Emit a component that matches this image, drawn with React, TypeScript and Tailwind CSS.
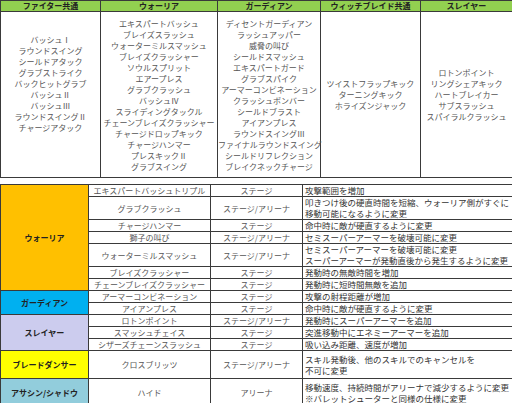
import React from "react";

const skillColumns = [
  {
    title: "ファイター共通",
    pad: true,
    skills: ["バッシュⅠ", "ラウンドスイング", "シールドアタック", "グラブストライク", "バックヒットグラブ", "バッシュⅡ", "バッシュⅢ", "ラウンドスイングⅡ", "チャージアタック"],
  },
  {
    title: "ウォーリア",
    skills: ["エキスパートバッシュ", "ブレイズスラッシュ", "ウォーターミルスマッシュ", "ブレイズクラッシャー", "ソウルスプリット", "エアープレス", "グラブクラッシュ", "バッシュⅣ", "スライディングタックル", "チェーンブレイズクラッシャー", "チャージドロップキック", "チャージハンマー", "プレスキックⅡ", "グラブスイング"],
  },
  {
    title: "ガーディアン",
    skills: ["ディセントガーディアン", "ラッシュアッパー", "威脅の叫び", "シールドスマッシュ", "エキスパートガード", "グラブスパイク", "アーマーコンビネーション", "クラッシュボンバー", "シールドブラスト", "アイアンプレス", "ラウンドスイングⅢ", "ファイナルラウンドスイング", "シールドリフレクション", "ブレイクネックチャージ"],
  },
  {
    title: "ウィッチブレイド共通",
    skills: ["ツイストフラップキック", "ターニングキック", "ホライズンジャック"],
  },
  {
    title: "スレイヤー",
    skills: ["ロトンポイント", "リングシェアキック", "ハートブレイカー", "サブスラッシュ", "スパイラルクラッシュ"],
  },
];

type Change = { skill: string; mode: string; note: string[]; h: string };
type Group = { name: string; bg: string; rows: Change[] };

const groups: Group[] = [
  {
    name: "ウォーリア",
    bg: "bg-[#ffc000]",
    rows: [
      { skill: "エキスパートバッシュトリプル", mode: "ステージ", note: ["攻撃範囲を増加"], h: "h-[12px]" },
      { skill: "グラブクラッシュ", mode: "ステージ/アリーナ", note: ["叩きつけ後の硬直時間を短縮、ウォーリア側がすぐに", "移動可能になるように変更"], h: "h-[22px]" },
      { skill: "チャージハンマー", mode: "ステージ", note: ["命中時に敵が硬直するように変更"], h: "h-[12px]" },
      { skill: "獅子の叫び", mode: "ステージ/アリーナ", note: ["セミスーパーアーマーを破壊可能に変更"], h: "h-[12px]" },
      { skill: "ウォーターミルスマッシュ", mode: "ステージ/アリーナ", note: ["セミスーパーアーマーを破壊可能に変更", "スーパーアーマーが発動直後から発生するように変更"], h: "h-[22px]" },
      { skill: "ブレイズクラッシャー", mode: "ステージ", note: ["発動時の無敵時間を増加"], h: "h-[12px]" },
      { skill: "チェーンブレイズクラッシャー", mode: "ステージ", note: ["発動時に短時間無敵を追加"], h: "h-[12px]" },
    ],
  },
  {
    name: "ガーディアン",
    bg: "bg-[#00b0f0]",
    rows: [
      { skill: "アーマーコンビネーション", mode: "ステージ", note: ["攻撃の射程距離が増加"], h: "h-[12px]" },
      { skill: "アイアンプレス", mode: "ステージ", note: ["命中時に敵が硬直するように変更"], h: "h-[12px]" },
    ],
  },
  {
    name: "スレイヤー",
    bg: "bg-[#ccccee]",
    rows: [
      { skill: "ロトンポイント", mode: "ステージ/アリーナ", note: ["発動時にスーパーアーマーを追加"], h: "h-[11px]" },
      { skill: "スマッシュチェイス", mode: "ステージ", note: ["突進移動中にエネミーアーマーを追加"], h: "h-[12px]" },
      { skill: "シザーズチェーンスラッシュ", mode: "ステージ", note: ["吸い込み距離、速度が増加"], h: "h-[12px]" },
    ],
  },
  {
    name: "ブレードダンサー",
    bg: "bg-[#ffff00]",
    rows: [
      { skill: "クロスブリッツ", mode: "ステージ/アリーナ", note: ["スキル発動後、他のスキルでのキャンセルを", "不可に変更"], h: "h-[28px]" },
    ],
  },
  {
    name: "アサシン/シャドウ",
    bg: "bg-[#92cddc]",
    rows: [
      { skill: "ハイド", mode: "アリーナ", note: ["移動速度、持続時間がアリーナで減少するように変更", "※バレットシューターと同様の仕様に変更"], h: "h-[28px]" },
    ],
  },
];

const cell = "border border-[#3a3a3a]";

export default function App() {
  return (
    <div className="w-[512px] h-[403px] overflow-hidden bg-white font-['Noto_Sans_CJK_JP',sans-serif] text-[8px] leading-[11px]">
      <table className="w-[512px] table-fixed border-collapse">
        <colgroup>
          <col className="w-[100px]" />
          <col className="w-[117px]" />
          <col className="w-[103px]" />
          <col className="w-[100px]" />
          <col className="w-[92px]" />
        </colgroup>
        <thead>
          <tr className="h-[11px] bg-[#92d050]">
            {skillColumns.map((c) => (
              <th key={c.title} className={`${cell} p-0 text-center font-bold text-[#222] leading-[10px]`}>
                {c.title}
              </th>
            ))}
          </tr>
        </thead>
        <tbody>
          <tr className="h-[166px]">
            {skillColumns.map((c) => (
              <td key={c.title} className={`${cell} p-0 text-center align-middle text-[#555] whitespace-nowrap`}>
                <div className={c.pad ? "pb-[22px]" : ""}>
                  {c.skills.map((s) => (
                    <div key={s}>{s}</div>
                  ))}
                </div>
              </td>
            ))}
          </tr>
        </tbody>
      </table>

      <table className="mt-[6px] w-[512px] table-fixed border-collapse">
        <colgroup>
          <col className="w-[88px]" />
          <col className="w-[122px]" />
          <col className="w-[92px]" />
          <col className="w-[210px]" />
        </colgroup>
        <tbody>
          {groups.map((g) =>
            g.rows.map((r, i) => (
              <tr key={r.skill} className={r.h}>
                {i === 0 && (
                  <td rowSpan={g.rows.length} className={`${cell} ${g.bg} p-0 text-center align-middle font-bold text-[#222]`}>
                    {g.name}
                  </td>
                )}
                <td className={`${cell} p-0 text-center align-middle text-[#555] whitespace-nowrap`}>{r.skill}</td>
                <td className={`${cell} p-0 text-center align-middle text-[#555] whitespace-nowrap`}>{r.mode}</td>
                <td className={`${cell} py-0 pl-[2px] pr-0 text-left align-middle text-[#333] whitespace-nowrap text-[8.5px]`}>
                  {r.note.map((n) => (
                    <div key={n}>{n}</div>
                  ))}
                </td>
              </tr>
            ))
          )}
        </tbody>
      </table>
    </div>
  );
}
